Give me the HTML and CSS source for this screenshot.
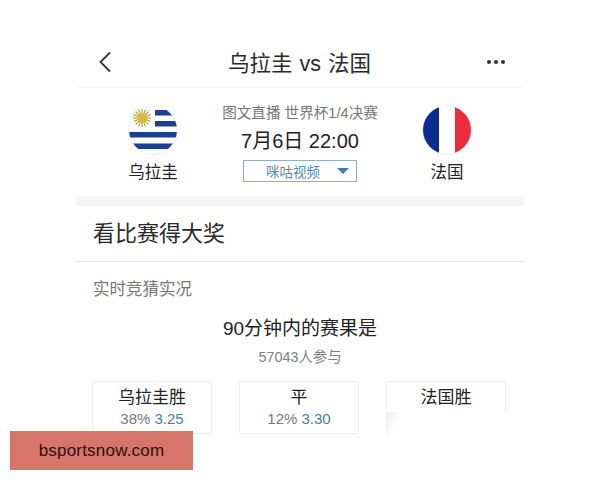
FILE: index.html
```html
<!DOCTYPE html>
<html lang="zh-CN">
<head>
  <meta charset="UTF-8" />
  <title>乌拉圭 vs 法国</title>
  <link rel="stylesheet" href="styles.css">
</head>
<body>

  <div class="page">
    <div class="nav">
      <svg class="back" width="14" height="22" viewBox="0 0 14 22">
        <path d="M12 1.5 L2.5 11 L12 20.5" fill="none" stroke="#333" stroke-width="1.8"/>
      </svg>
      <div class="nav-title">乌拉圭 vs 法国</div>
      <div class="dots"><i></i><i></i><i></i></div>
    </div>

    <div class="match">
      <div class="team">
        <svg class="flag" width="50" height="50" viewBox="0 0 50 50">
          <defs>
            <clipPath id="round"><circle cx="25" cy="25" r="24"/></clipPath>
          </defs>
          <circle cx="25" cy="25" r="24.5" fill="#fff" stroke="#f0f0f0"/>
          <g clip-path="url(#round)" fill="#1c3f94">
            <rect x="27" y="5" width="24" height="5.5"/>
            <rect x="27" y="16" width="24" height="5.5"/>
            <rect x="0" y="27" width="50" height="5.5"/>
            <rect x="0" y="38.5" width="50" height="5.5"/>
          </g>
          <g stroke="#b8962a" stroke-width="1.1">
            <path d="M14 4 V22 M5 13 H23 M7.6 6.6 L20.4 19.4 M20.4 6.6 L7.6 19.4"/>
            <path d="M10.5 4.6 L17.5 21.4 M17.5 4.6 L10.5 21.4 M5.6 9.5 L22.4 16.5 M22.4 9.5 L5.6 16.5"/>
          </g>
          <circle cx="14" cy="13" r="4.6" fill="#dcb935"/>
        </svg>
        <div class="team-name">乌拉圭</div>
      </div>

      <div class="info">
        <div class="info-sub">图文直播 世界杯1/4决赛</div>
        <div class="info-time">7月6日 22:00</div>
        <div class="video-btn">
          <span>咪咕视频</span>
          <i class="arrow"></i>
        </div>
      </div>

      <div class="team">
        <svg class="flag" width="50" height="50" viewBox="0 0 50 50">
          <defs>
            <clipPath id="round2"><circle cx="25" cy="25" r="24"/></clipPath>
          </defs>
          <circle cx="25" cy="25" r="24.5" fill="#fff" stroke="#f0f0f0"/>
          <g clip-path="url(#round2)">
            <rect x="0" y="0" width="17" height="50" fill="#0b2c90"/>
            <rect x="33" y="0" width="17" height="50" fill="#ec2b3d"/>
          </g>
        </svg>
        <div class="team-name">法国</div>
      </div>
    </div>

    <div class="gap-bar"></div>

    <div class="prize-title">看比赛得大奖</div>

    <div class="section-label">实时竞猜实况</div>
    <div class="question">90分钟内的赛果是</div>
    <div class="count">57043人参与</div>

    <div class="options">
      <div class="option">
        <div class="option-name">乌拉圭胜</div>
        <div class="option-odds">38% <span>3.25</span></div>
      </div>
      <div class="option">
        <div class="option-name">平</div>
        <div class="option-odds">12% <span>3.30</span></div>
      </div>
      <div class="option">
        <div class="option-name">法国胜</div>
      </div>
    </div>

    <div class="patch"></div>
  </div>

  <div class="watermark">bsportsnow.com</div>

</body>
</html>
```

FILE: styles.css
```css
* {
  box-sizing: border-box;
  margin: 0;
  padding: 0;
}

body {
  font-family: 'Liberation Sans', 'Noto Sans CJK SC', sans-serif;
  background-color: #fff;
  color: #222;
  width: 600px;
  height: 480px;
  overflow: hidden;
  position: relative;
}

.page {
  width: 448px;
  margin-left: 76px;
  padding-top: 36px;
  position: relative;
}

.nav {
  height: 52px;
  display: flex;
  align-items: center;
  justify-content: space-between;
  padding: 0 19px 0 22px;
  border-bottom: 1px solid #f6f6f6;
}

.nav-title {
  font-size: 21.5px;
  word-spacing: 1px;
  color: #2a2a2a;
}

.dots {
  display: flex;
  gap: 3px;
}

.dots i {
  width: 4px;
  height: 4px;
  border-radius: 50%;
  background-color: #333;
}

.match {
  height: 108px;
  display: grid;
  grid-template-columns: 154px 140px 154px;
}

.team {
  display: flex;
  flex-direction: column;
  align-items: center;
  padding-top: 17px;
}

.flag {
  display: block;
}

.team-name {
  font-size: 16.5px;
  line-height: 22px;
  margin-top: 6px;
}

.info {
  display: flex;
  flex-direction: column;
  align-items: center;
  margin: 0 -10px;
  padding-top: 15px;
}

.info-sub {
  font-size: 14.6px;
  line-height: 20px;
  color: #777;
  white-space: nowrap;
}

.info-time {
  font-size: 20px;
  line-height: 26px;
  margin-top: 5px;
  white-space: nowrap;
}

.video-btn {
  width: 114px;
  height: 22px;
  margin-top: 6px;
  display: flex;
  align-items: center;
  padding-left: 22px;
  border: 1px solid #8db1c2;
  font-size: 13.5px;
  color: #4d8db3;
}

.arrow {
  width: 0;
  height: 0;
  margin-left: 17px;
  border-left: 6px solid transparent;
  border-right: 6px solid transparent;
  border-top: 6px solid #3d7fb5;
}

.gap-bar {
  height: 10px;
  background-color: #f6f6f6;
}

.prize-title {
  height: 56px;
  line-height: 56px;
  padding-left: 17px;
  font-size: 22px;
  color: #2a2a2a;
  border-bottom: 1px solid #e8e8e8;
}

.section-label {
  margin-top: 16px;
  padding-left: 17px;
  font-size: 16.5px;
  line-height: 22px;
  color: #777;
}

.question {
  margin-top: 16px;
  text-align: center;
  font-size: 19px;
  line-height: 26px;
}

.count {
  margin-top: 5px;
  text-align: center;
  font-size: 14.4px;
  line-height: 20px;
  color: #808080;
}

.options {
  display: flex;
  gap: 27px;
  margin-top: 14px;
  padding-left: 16px;
}

.option {
  width: 120px;
  height: 53px;
  border: 1px solid #eee;
  border-radius: 2px;
  text-align: center;
}

.option-name {
  font-size: 17px;
  line-height: 24px;
  margin-top: 4px;
}

.option-odds {
  font-size: 15px;
  line-height: 18px;
  color: #777;
}

.option-odds span {
  color: #3f7fa8;
}

.patch {
  position: absolute;
  left: 311px;
  top: 412px;
  width: 136px;
  height: 26px;
  background: linear-gradient(115deg, #eee 0, #fff 14px);
}

.watermark {
  position: absolute;
  left: 10px;
  top: 431px;
  width: 183px;
  height: 39px;
  line-height: 39px;
  text-align: center;
  font-size: 17px;
  letter-spacing: 0.2px;
  color: #2a1210;
  background-color: #d8756a;
}
```
